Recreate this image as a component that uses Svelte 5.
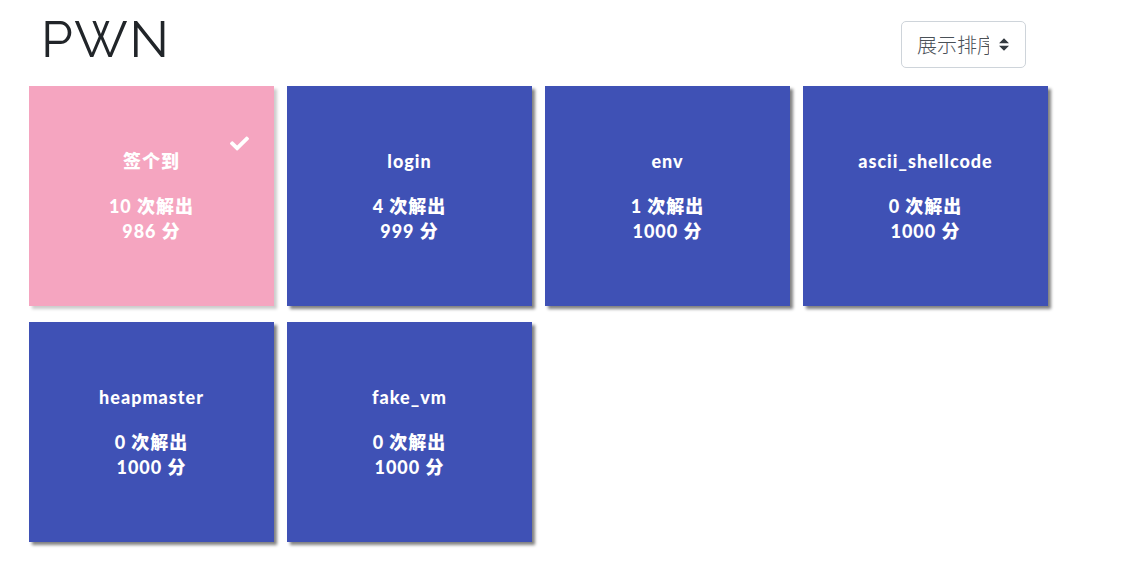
<script>
  const challenges = [
    { name: '签个到', solves: 10, value: 986, solved: true },
    { name: 'login', solves: 4, value: 999 },
    { name: 'env', solves: 1, value: 1000 },
    { name: 'ascii_shellcode', solves: 0, value: 1000 },
    { name: 'heapmaster', solves: 0, value: 1000 },
    { name: 'fake_vm', solves: 0, value: 1000 }
  ];
</script>

<main>
  <header>
    <h1>PWN</h1>
    <select aria-label="展示排序">
      <option>展示排序</option>
    </select>
  </header>

  <div class="grid">
    {#each challenges as c (c.name)}
      <button type="button" class="card" class:solved={c.solved}>
        {#if c.solved}
          <svg class="check" viewBox="0 0 512 512" aria-hidden="true">
            <path
              fill="currentColor"
              d="M173.898 439.404l-166.4-166.4c-9.997-9.997-9.997-26.206 0-36.204l36.203-36.204c9.997-9.998 26.207-9.998 36.204 0L192 312.69 432.095 72.596c9.997-9.997 26.207-9.997 36.204 0l36.203 36.204c9.997 9.997 9.997 26.206 0 36.204l-294.4 294.401c-9.998 9.997-26.207 9.997-36.204-.001z"
            />
          </svg>
        {/if}
        <span class="name">{c.name}</span>
        <span>{c.solves} 次解出</span>
        <span>{c.value} 分</span>
      </button>
    {/each}
  </div>
</main>

<style>
  :global(body) {
    margin: 0;
    background: #fff;
  }

  main {
    padding: 9px 84px 32px 29px;
    font-family: Lato, 'Noto Sans CJK SC', sans-serif;
    color: #212529;
  }

  header {
    display: flex;
    justify-content: space-between;
    align-items: flex-start;
    padding: 0 22px 17px 12px;
  }

  h1 {
    margin: 0;
    font-family: Raleway, Lato, sans-serif;
    font-size: 51px;
    font-weight: 400;
    line-height: 60px;
    letter-spacing: 2px;
  }

  select {
    appearance: none;
    box-sizing: border-box;
    width: 125px;
    height: 47px;
    margin-top: 12px;
    padding: 0 36px 0 15px;
    border: 1px solid #ced4da;
    border-radius: 5px;
    font-family: Lato, 'Noto Sans CJK SC', sans-serif;
    font-size: 20px;
    font-weight: 300;
    color: #495057;
    text-overflow: clip;
    background: #fff
      url("data:image/svg+xml,%3Csvg xmlns='http://www.w3.org/2000/svg' viewBox='0 0 4 5'%3E%3Cpath fill='%23343a40' d='M2 0L0 2h4zm0 5L0 3h4z'/%3E%3C/svg%3E")
      no-repeat right 16px center / 10px 13px;
  }

  .grid {
    display: grid;
    grid-template-columns: repeat(4, minmax(0, 1fr));
    gap: 16px 13px;
  }

  .card {
    position: relative;
    display: flex;
    flex-direction: column;
    align-items: center;
    padding: 63px 12px 62px;
    border: 0;
    background: #3f51b5;
    box-shadow: 3px 3px 3px grey;
    color: #fff;
    font-family: inherit;
    font-size: 18px;
    font-weight: 900;
    line-height: 25px;
    letter-spacing: 1px;
    cursor: pointer;
  }

  .solved {
    background: #f5a5c0;
    box-shadow: 3px 3px 3px #ccc;
  }

  .name {
    margin-bottom: 20px;
  }

  .check {
    position: absolute;
    top: 48px;
    right: 25px;
    width: 19px;
    height: 19px;
  }
</style>
